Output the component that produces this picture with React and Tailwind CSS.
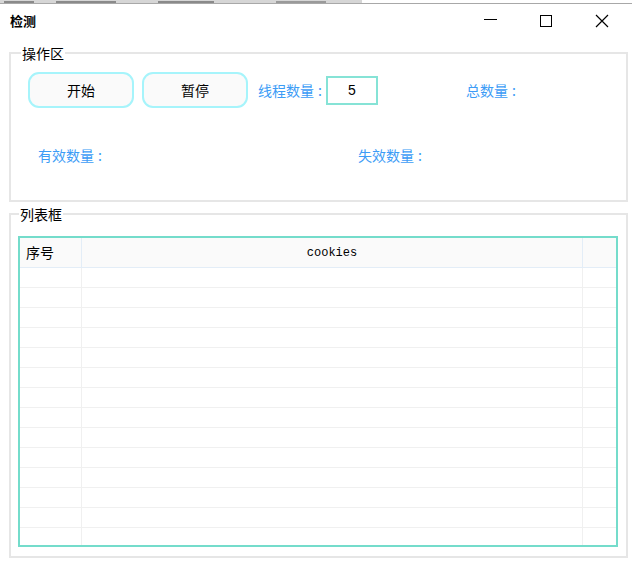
import React from "react";

const font = { fontFamily: '"Noto Sans CJK SC", "Noto Sans", sans-serif' };

function TitleBar() {
  return (
    <div className="flex items-center h-[34px] pl-[10px]">
      <span className="text-[13px] font-bold text-black leading-none mt-[-1px]">检测</span>
      <div className="ml-auto flex items-center h-full">
        {/* minimize */}
        <div className="w-[56px] flex justify-center">
          <div className="w-[13px] h-[1px] bg-black mt-[-2px]" />
        </div>
        {/* maximize */}
        <div className="w-[56px] flex justify-center">
          <div className="w-[12px] h-[12px] border border-black mt-[-1px]" />
        </div>
        {/* close */}
        <div className="w-[56px] flex justify-center mr-[2px]">
          <svg width="14" height="14" viewBox="0 0 14 14" className="mt-[-1px]">
            <path d="M1 1 L13 13 M13 1 L1 13" stroke="#000" strokeWidth="1.2" />
          </svg>
        </div>
      </div>
    </div>
  );
}

function Btn({ children }) {
  return (
    <button className="w-[106px] h-[36px] rounded-[11px] border-2 border-[#a6f4fb] bg-[#fafafa] text-[14px] text-black">
      {children}
    </button>
  );
}

function Label({ children, className = "" }) {
  return (
    <span className={`text-[14px] text-[#3c9cf6] flex items-center ${className}`}>
      {children}
      <span className="ml-[4px] mr-[2px]">:</span>
    </span>
  );
}

export default function App() {
  const rows = Array.from({ length: 14 });
  return (
    <div className="w-[632px] h-[567px] bg-white overflow-hidden relative" style={font}>
      {/* top strip from the window behind */}
      <div className="flex h-[4px] border-b border-[#a8a8a8]">
        <div className="w-[362px] bg-[#d6d6d6] flex gap-[2px] items-end">
          <div className="w-[30px] h-[2px] bg-[#8a8a8a] ml-[4px]" />
          <div className="w-[60px] h-[2px] bg-[#8a8a8a] ml-[20px]" />
          <div className="w-[56px] h-[2px] bg-[#8a8a8a] ml-[40px]" />
          <div className="w-[50px] h-[2px] bg-[#9a9a9a] ml-[60px]" />
        </div>
      </div>

      <TitleBar />

      <fieldset className="ml-[9px] mr-[4px] mt-[7px] h-[157px] border-2 border-[#e6e6e6] pl-[10px] pt-[11px] min-w-0">
        <legend className="px-[1px] text-[14px] leading-[16px] text-black">操作区</legend>
        <div className="flex items-center gap-[8px] pl-[7px]">
          <Btn>开始</Btn>
          <Btn>暂停</Btn>
          <Label className="ml-[2px]">线程数量</Label>
          <div className="w-[52px] h-[29px] border-2 border-[#86e3d6] flex items-center justify-center text-[14px] text-black ml-[-6px]" style={{ fontFamily: '"Liberation Sans", sans-serif' }}>
            5
          </div>
          <Label className="ml-[80px]">总数量</Label>
        </div>
        <div className="flex items-center mt-[37px] pl-[17px]">
          <Label>有效数量</Label>
          <Label className="ml-[254px]">失效数量</Label>
        </div>
      </fieldset>

      <fieldset className="ml-[9px] mr-[4px] mt-[4px] h-[352px] border-2 border-[#e6e6e6] pl-[7px] pr-[8px] pt-[14px] min-w-0">
        <legend className="ml-[1px] px-[1px] text-[14px] leading-[16px] text-black">列表框</legend>
        <div className="h-[311px] border-2 border-[#74dccb] overflow-hidden bg-white">
          <div className="flex h-[30px] bg-[#fafafa] border-b border-[#e3edf7]">
            <div className="w-[62px] border-r border-[#e3edf7] flex items-center pl-[6px] text-[14px] text-black">
              序号
            </div>
            <div className="flex-1 flex items-center justify-center text-[12px] text-black" style={{ fontFamily: '"Liberation Mono", monospace' }}>
              cookies
            </div>
            <div className="w-[34px] border-l border-[#e3edf7]" />
          </div>
          {rows.map((_, i) => (
            <div key={i} className="flex h-[20px] border-b border-[#f0f0f0]">
              <div className="w-[62px] border-r border-[#f0f0f0]" />
              <div className="flex-1" />
              <div className="w-[34px] border-l border-[#f0f0f0]" />
            </div>
          ))}
        </div>
      </fieldset>
    </div>
  );
}
